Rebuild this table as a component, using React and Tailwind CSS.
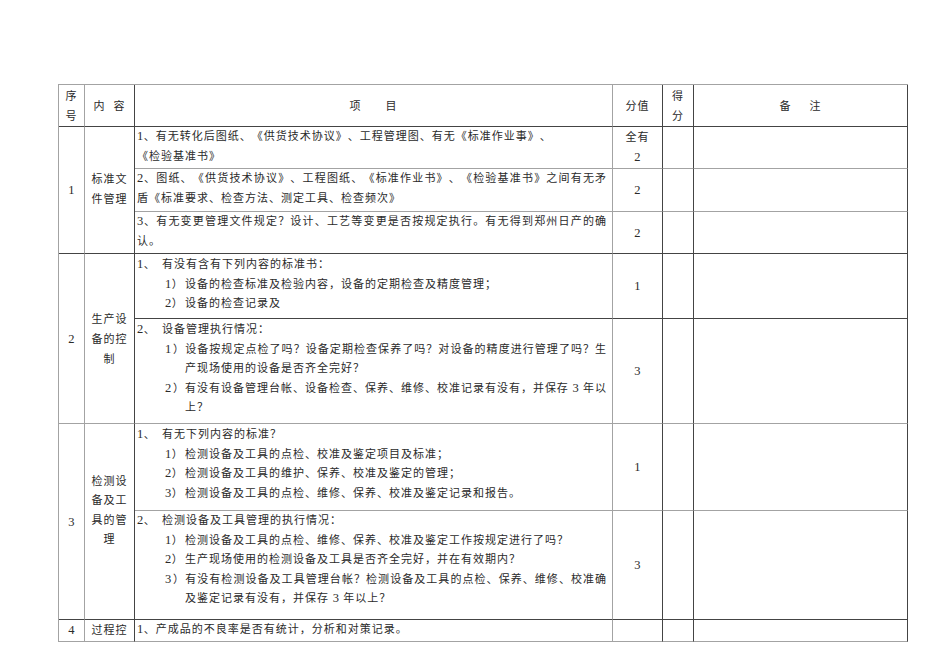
// Inspection checklist table (scanned document page)

const FONT = { fontFamily: '"Liberation Serif", "Noto Sans CJK SC", serif' };

// Border colours: light lines and dark lines, as in the source document
const RG = 'border-r-[#a3a3a3]';
const RD = 'border-r-[#444]';
const BG = 'border-b-[#a3a3a3]';
const BD = 'border-b-[#444]';

const JUSTIFY = 'text-justify [text-align-last:justify] tracking-[0.9px]';

function Cell({ className = '', children }) {
  return <div className={`border-r border-b ${className}`}>{children}</div>;
}

// latin digits are set a bit larger than the CJK text
function N({ children }) {
  return <span className="text-[12.5px] tracking-[0.5px]">{children}</span>;
}

// "1、 text" main item
function Main({ n, space = true, children, justify }) {
  return (
    <div className={justify ? JUSTIFY : 'whitespace-nowrap'}>
      <span className={space ? 'inline-block w-[25px]' : ''}><N>{n}</N>、</span>
      {children}
    </div>
  );
}

// "1） text" indented sub item
function Sub({ n, children, justify }) {
  return (
    <div className={`pl-[28px] ${justify ? JUSTIFY : 'whitespace-nowrap'}`}>
      <span className="inline-block w-[20px]"><N>{n}</N>）</span>
      {children}
    </div>
  );
}

function Cont({ children }) {
  return <div className="pl-[48px] whitespace-nowrap">{children}</div>;
}

function Line({ children, justify }) {
  return <div className={justify ? JUSTIFY : 'whitespace-nowrap'}>{children}</div>;
}

const center = 'flex flex-col items-center justify-center text-center';
const body = 'pl-[2px] pr-[5px] leading-[19.6px]';

export default function App() {
  return (
    <div
      className="min-h-[672px] w-[950px] bg-white pt-[84px] pl-[58px] text-[#2a2a2a] text-[11px] tracking-[1px] [text-spacing-trim:space-all]"
      style={FONT}
    >
      <div className="grid w-[850px] border-t border-l border-t-[#a3a3a3] border-l-[#a3a3a3] grid-cols-[26px_50px_478px_50px_31px_214px] grid-rows-[42px_42px_43px_42px_65px_105px_87px_109px_22px] leading-[20px]">
        {/* header */}
        <Cell className={`col-start-1 row-start-1 ${RG} ${BD} ${center}`}>
          <div>序</div>
          <div>号</div>
        </Cell>
        <Cell className={`col-start-2 row-start-1 ${RD} ${BD} ${center}`}>
          <div className="flex gap-[8px]"><span>内</span><span>容</span></div>
        </Cell>
        <Cell className={`col-start-3 row-start-1 ${RG} ${BD} ${center}`}>
          <div className="flex gap-[24px]"><span>项</span><span>目</span></div>
        </Cell>
        <Cell className={`col-start-4 row-start-1 ${RD} ${BD} ${center}`}>分值</Cell>
        <Cell className={`col-start-5 row-start-1 ${RD} ${BD} ${center}`}>
          <div>得</div>
          <div>分</div>
        </Cell>
        <Cell className={`col-start-6 row-start-1 ${RD} ${BD} ${center}`}>
          <div className="flex gap-[18px]"><span>备</span><span>注</span></div>
        </Cell>

        {/* 1 标准文件管理 */}
        <Cell className={`col-start-1 row-start-2 row-span-3 ${RG} ${BD} ${center}`}><N>1</N></Cell>
        <Cell className={`col-start-2 row-start-2 row-span-3 ${RD} ${BD} ${center} leading-[19.6px]`}>
          <div>标准文</div>
          <div>件管理</div>
        </Cell>
        <Cell className={`col-start-3 row-start-2 ${RG} ${BG} ${body}`}>
          <Main n="1" space={false}>有无转化后图纸、《供货技术协议》、工程管理图、有无《标准作业事》、</Main>
          <Line>《检验基准书》</Line>
        </Cell>
        <Cell className={`col-start-4 row-start-2 ${RD} ${BG} flex flex-col items-center text-center pt-[-1px] leading-[20px]`}>
          <div>全有</div>
          <div><N>2</N></div>
        </Cell>
        <Cell className={`col-start-5 row-start-2 ${RD} ${BG}`} />
        <Cell className={`col-start-6 row-start-2 ${RD} ${BG}`} />

        <Cell className={`col-start-3 row-start-3 ${RG} ${BG} ${body}`}>
          <Main n="2" space={false} justify>图纸、《供货技术协议》、工程图纸、《标准作业书》、《检验基准书》之间有无矛</Main>
          <Line>盾《标准要求、检查方法、测定工具、检查频次》</Line>
        </Cell>
        <Cell className={`col-start-4 row-start-3 ${RD} ${BG} ${center}`}><N>2</N></Cell>
        <Cell className={`col-start-5 row-start-3 ${RD} ${BG}`} />
        <Cell className={`col-start-6 row-start-3 ${RD} ${BG}`} />

        <Cell className={`col-start-3 row-start-4 ${RG} ${BD} ${body}`}>
          <Main n="3" space={false} justify>有无变更管理文件规定？设计、工艺等变更是否按规定执行。有无得到郑州日产的确</Main>
          <Line>认。</Line>
        </Cell>
        <Cell className={`col-start-4 row-start-4 ${RD} ${BD} ${center}`}><N>2</N></Cell>
        <Cell className={`col-start-5 row-start-4 ${RD} ${BD}`} />
        <Cell className={`col-start-6 row-start-4 ${RD} ${BD}`} />

        {/* 2 生产设备的控制 */}
        <Cell className={`col-start-1 row-start-5 row-span-2 ${RG} ${BG} ${center}`}><N>2</N></Cell>
        <Cell className={`col-start-2 row-start-5 row-span-2 ${RD} ${BG} ${center}`}>
          <div>生产设</div>
          <div>备的控</div>
          <div>制</div>
        </Cell>
        <Cell className={`col-start-3 row-start-5 ${RG} ${BD} ${body} pt-[1px]`}>
          <Main n="1">有没有含有下列内容的标准书：</Main>
          <Sub n="1">设备的检查标准及检验内容，设备的定期检查及精度管理；</Sub>
          <Sub n="2">设备的检查记录及</Sub>
        </Cell>
        <Cell className={`col-start-4 row-start-5 ${RD} ${BD} ${center}`}><N>1</N></Cell>
        <Cell className={`col-start-5 row-start-5 ${RD} ${BD}`} />
        <Cell className={`col-start-6 row-start-5 ${RD} ${BD}`} />

        <Cell className={`col-start-3 row-start-6 ${RG} ${BG} ${body} pt-[1px]`}>
          <Main n="2">设备管理执行情况：</Main>
          <Sub n="1" justify>设备按规定点检了吗？设备定期检查保养了吗？对设备的精度进行管理了吗？生</Sub>
          <Cont>产现场使用的设备是否齐全完好？</Cont>
          <Sub n="2" justify>有没有设备管理台帐、设备检查、保养、维修、校准记录有没有，并保存 <N>3</N> 年以</Sub>
          <Cont>上？</Cont>
        </Cell>
        <Cell className={`col-start-4 row-start-6 ${RD} ${BG} ${center}`}><N>3</N></Cell>
        <Cell className={`col-start-5 row-start-6 ${RD} ${BG}`} />
        <Cell className={`col-start-6 row-start-6 ${RD} ${BG}`} />

        {/* 3 检测设备及工具的管理 */}
        <Cell className={`col-start-1 row-start-7 row-span-2 ${RG} ${BD} ${center}`}><N>3</N></Cell>
        <Cell className={`col-start-2 row-start-7 row-span-2 ${RD} ${BD} ${center} pb-[22px] leading-[19.2px]`}>
          <div>检测设</div>
          <div>备及工</div>
          <div>具的管</div>
          <div>理</div>
        </Cell>
        <Cell className={`col-start-3 row-start-7 ${RG} ${BG} ${body} pt-[1px]`}>
          <Main n="1">有无下列内容的标准？</Main>
          <Sub n="1">检测设备及工具的点检、校准及鉴定项目及标准；</Sub>
          <Sub n="2">检测设备及工具的维护、保养、校准及鉴定的管理；</Sub>
          <Sub n="3">检测设备及工具的点检、维修、保养、校准及鉴定记录和报告。</Sub>
        </Cell>
        <Cell className={`col-start-4 row-start-7 ${RD} ${BG} ${center}`}><N>1</N></Cell>
        <Cell className={`col-start-5 row-start-7 ${RD} ${BG}`} />
        <Cell className={`col-start-6 row-start-7 ${RD} ${BG}`} />

        <Cell className={`col-start-3 row-start-8 ${RG} ${BD} ${body}`}>
          <Main n="2">检测设备及工具管理的执行情况：</Main>
          <Sub n="1">检测设备及工具的点检、维修、保养、校准及鉴定工作按规定进行了吗？</Sub>
          <Sub n="2">生产现场使用的检测设备及工具是否齐全完好，并在有效期内？</Sub>
          <Sub n="3" justify>有没有检测设备及工具管理台帐？检测设备及工具的点检、保养、维修、校准确</Sub>
          <Cont>及鉴定记录有没有，并保存 <N>3</N> 年以上？</Cont>
        </Cell>
        <Cell className={`col-start-4 row-start-8 ${RD} ${BD} ${center}`}><N>3</N></Cell>
        <Cell className={`col-start-5 row-start-8 ${RD} ${BD}`} />
        <Cell className={`col-start-6 row-start-8 ${RD} ${BD}`} />

        {/* 4 过程控制 (continues on next page) */}
        <Cell className={`col-start-1 row-start-9 ${RG} ${BG} text-center overflow-hidden`}><N>4</N></Cell>
        <Cell className={`col-start-2 row-start-9 ${RD} ${BG} text-center overflow-hidden`}>过程控</Cell>
        <Cell className={`col-start-3 row-start-9 ${RG} ${BG} ${body} overflow-hidden`}>
          <Main n="1" space={false}>产成品的不良率是否有统计，分析和对策记录。</Main>
        </Cell>
        <Cell className={`col-start-4 row-start-9 ${RD} ${BG}`} />
        <Cell className={`col-start-5 row-start-9 ${RD} ${BG}`} />
        <Cell className={`col-start-6 row-start-9 ${RD} ${BG}`} />
      </div>
    </div>
  );
}
